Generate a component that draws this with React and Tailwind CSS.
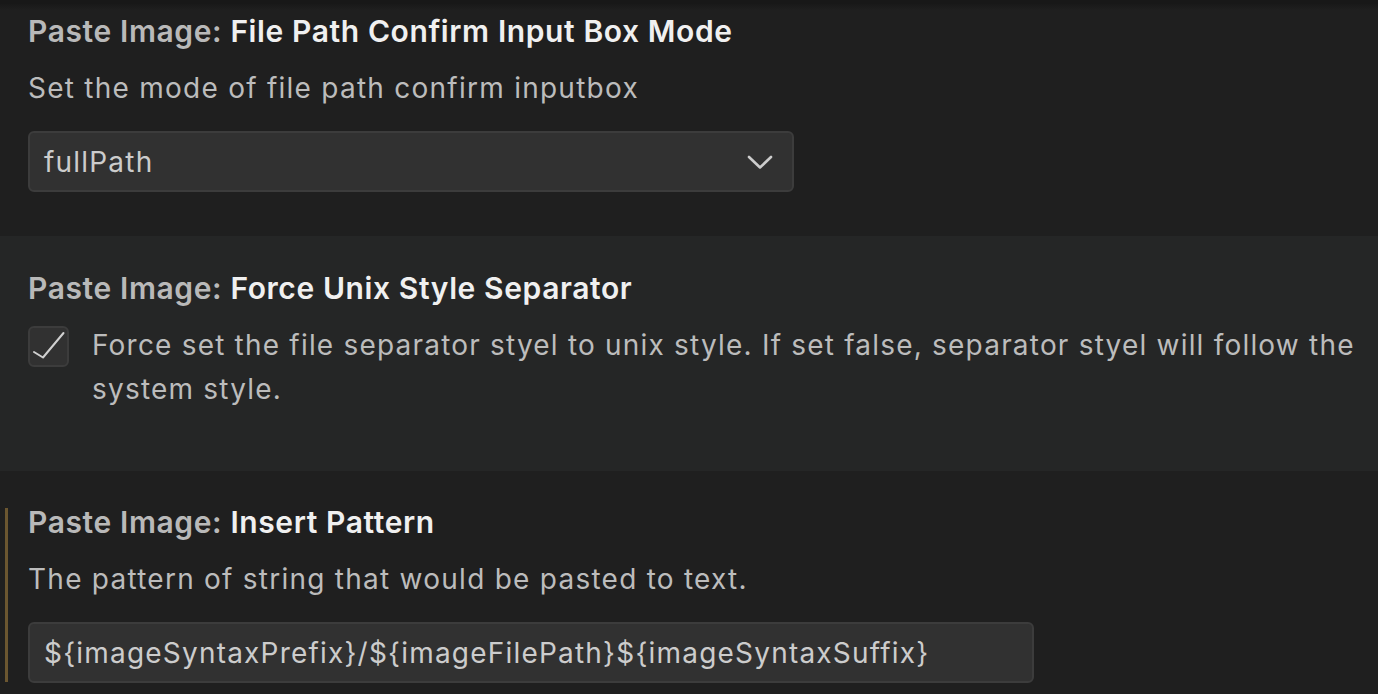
import React from 'react';

const font = { fontFamily: 'Inter, "Noto Sans", sans-serif' };

const Title = ({ category, name }) => (
  <div className="h-10 leading-10 text-[30px] tracking-[0.6px] font-semibold whitespace-nowrap">
    <span className="text-[#b9b9b9]">{category}: </span>
    <span className="text-[#f0f0f0]">{name}</span>
  </div>
);

const Description = ({ children }) => (
  <div className="mt-[15px] leading-[44px] text-[28px] tracking-[1.25px] text-[#bcbcbc]">{children}</div>
);

const App = () => {
  return (
    <div className="w-[1378px] h-[694px] overflow-hidden bg-[#1f1f1f] relative" style={font}>
      {/* sticky header edge */}
      <div className="absolute top-0 left-0 right-0 h-[4px] bg-[#181818]" />
      <div className="absolute top-[4px] left-0 right-0 h-[6px] bg-gradient-to-b from-[#191919] to-[#1f1f1f]" />

      {/* File path confirm */}
      <section className="pt-[11px] pb-[44px] pl-[28px] pr-[6px] bg-[#1f1f1f]">
        <Title category="Paste Image" name="File Path Confirm Input Box Mode" />
        <Description>Set the mode of file path confirm inputbox</Description>
        <div className="mt-[21px] w-[766px] h-[61px] flex items-center justify-between pl-[14px] pr-[18px] bg-[#313131] border-2 border-[#3c3c3c] rounded-[6px]">
          <span className="text-[28px] tracking-[1.2px] text-[#cccccc]">fullPath</span>
          <svg width="28" height="16" viewBox="0 0 28 16" fill="none">
            <path d="M3 3 L14 13.5 L25 3" stroke="#cccccc" strokeWidth="2.6" strokeLinecap="round" strokeLinejoin="round" />
          </svg>
        </div>
      </section>

      {/* Force unix style separator */}
      <section className="pt-[32px] pb-[60px] pl-[28px] pr-[6px] bg-[#252626]">
        <Title category="Paste Image" name="Force Unix Style Separator" />
        <div className="mt-[15px] flex items-start gap-[23px]">
          <div className="mt-[3px] w-[41px] h-[41px] shrink-0 rounded-[6px] bg-[#313131] border-2 border-[#3c3c3c] flex items-center justify-center">
            <svg width="41" height="41" viewBox="0 0 41 41" fill="none" className="-m-[2px]">
              <path d="M6 26 L15 31.5 L35.5 7" stroke="#d0d0d0" strokeWidth="2" strokeLinecap="round" strokeLinejoin="round" />
            </svg>
          </div>
          <div className="leading-[44px] text-[28px] tracking-[1.2px] text-[#bcbcbc]">
            Force set the file separator styel to unix style. If set false, separator styel will follow the system style.
          </div>
        </div>
      </section>

      {/* Insert pattern */}
      <section className="relative pt-[31px] pb-[40px] pl-[28px] pr-[6px] bg-[#1f1f1f]">
        <div className="absolute left-[5px] top-[37px] w-[3px] h-[174px] bg-[#6b5630]" />
        <Title category="Paste Image" name="Insert Pattern" />
        <Description>The pattern of string that would be pasted to text.</Description>
        <div className="mt-[21px] w-[1006px] h-[61px] flex items-center pl-[14px] bg-[#313131] border-2 border-[#3c3c3c] rounded-[6px]">
          <span className="text-[28px] tracking-[1.2px] text-[#cccccc]">{'${imageSyntaxPrefix}/${imageFilePath}${imageSyntaxSuffix}'}</span>
        </div>
      </section>
    </div>
  );
};

export default App;
